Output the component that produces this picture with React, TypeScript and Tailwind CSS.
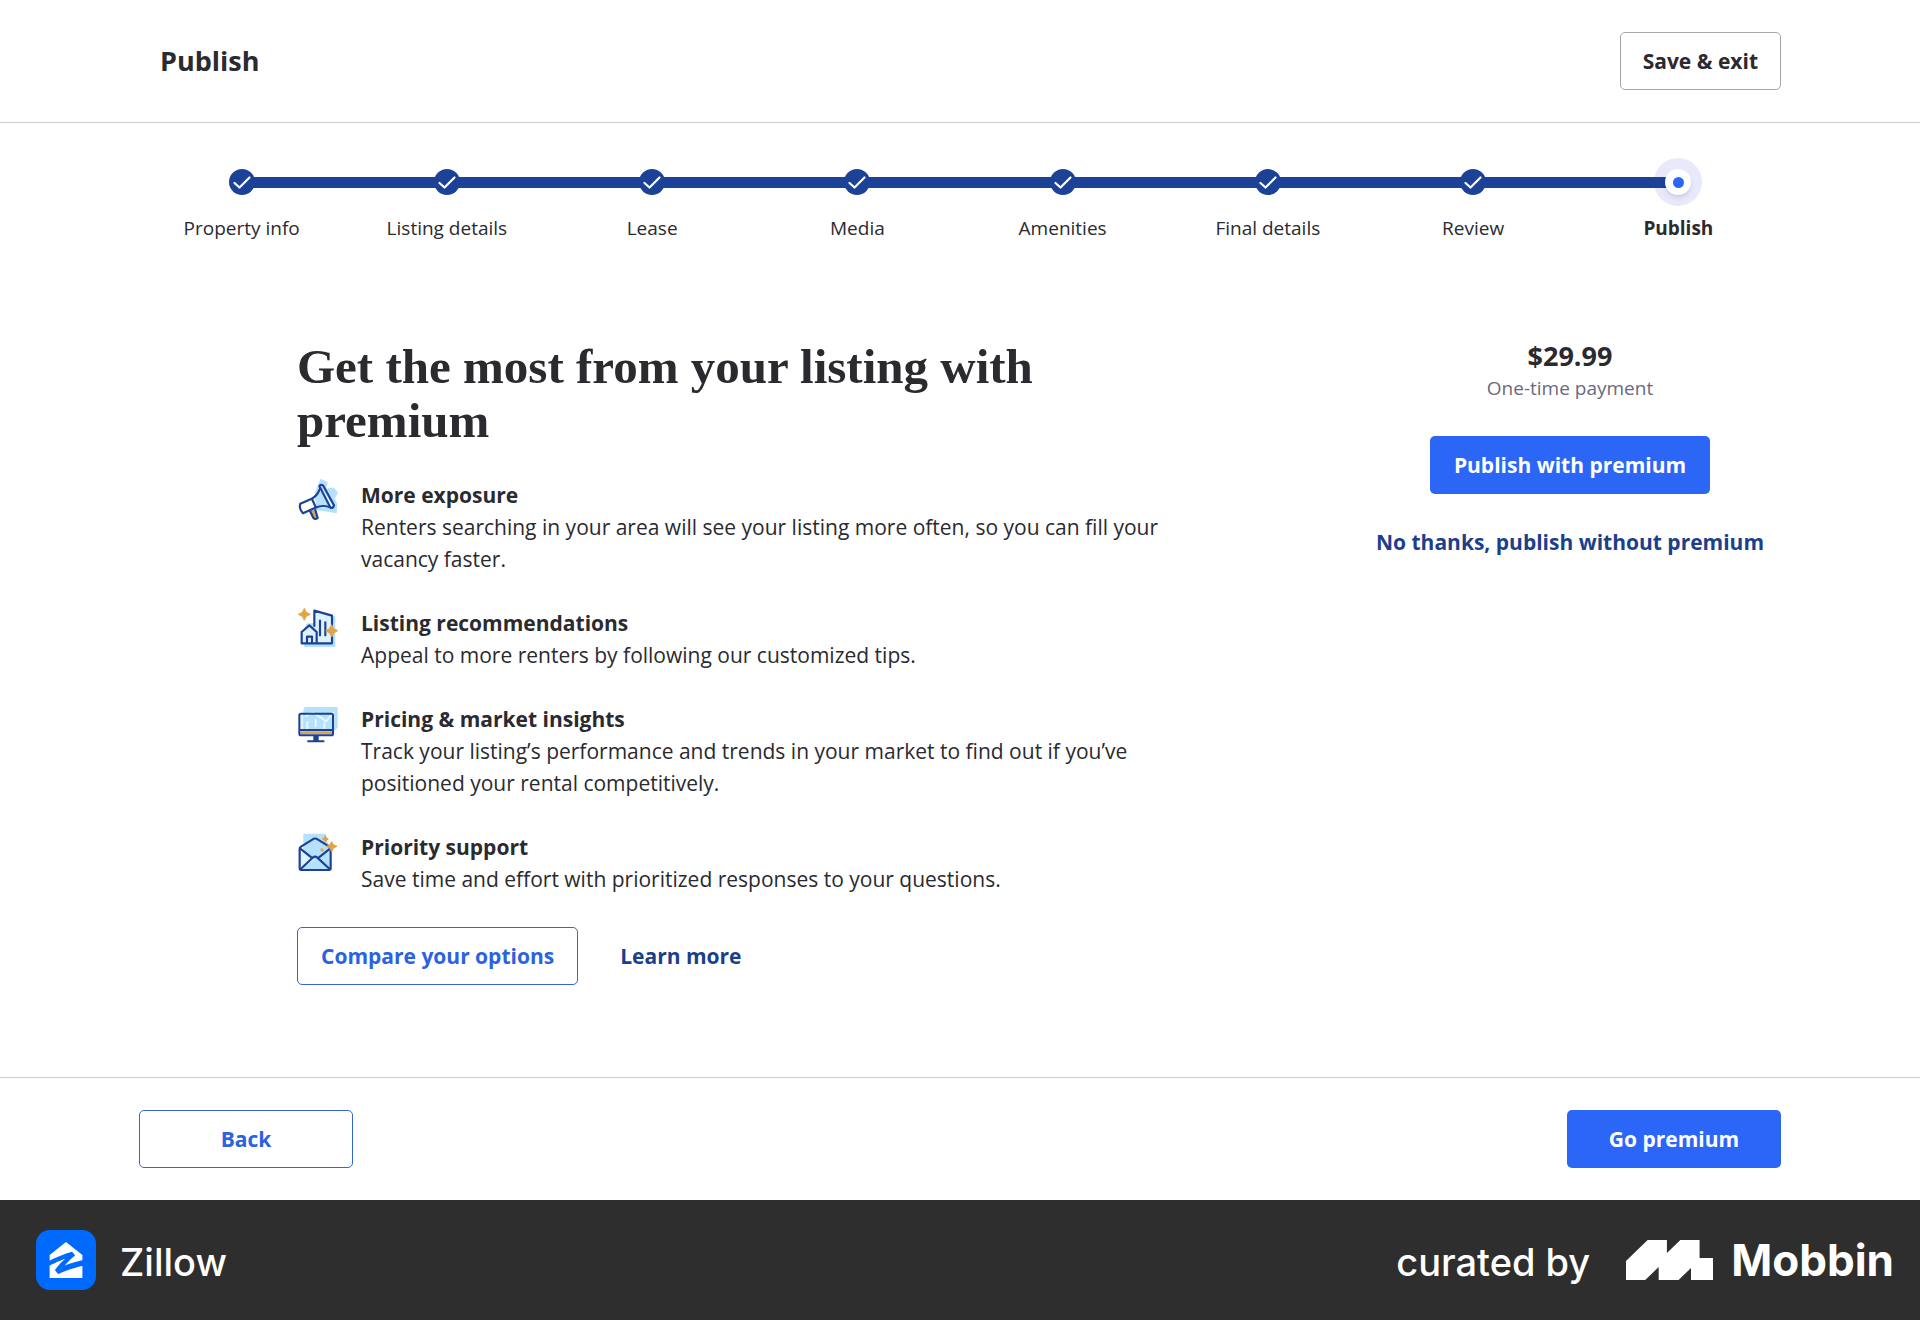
import type { ReactNode } from "react";
import { SiZillow } from "react-icons/si";

const steps = [
  "Property info",
  "Listing details",
  "Lease",
  "Media",
  "Amenities",
  "Final details",
  "Review",
  "Publish",
];

const NAVY = "#1c4297";
const SKY = "#b5e1fb";
const GOLD = "#e0a445";

function Megaphone() {
  return (
    <svg viewBox="51 57 132 132" className="size-11 shrink-0 overflow-visible" fill="none" aria-hidden="true">
      <path d="M122 56L144 67L138 86L160 82L174 98L164 116L172 131L170 160L108 150L104 98Z" fill={SKY} />
      <path d="M121 78L159 139L144 143L106 144L68 159Q58 143 60 131L96 114Q112 102 118 80Z" fill="#fff" />
      <path d="M104 112L124 92L148 134L110 140Z" fill={SKY} />
      <path d="M92 152L104 149L114 174Q108 181 102 176Z" fill="#d9a257" />
      <g stroke={NAVY} strokeWidth="6.5" strokeLinejoin="round" strokeLinecap="round">
        <path d="M118 78Q122 72 129 76L162 136Q161 144 152 144Z" />
        <path d="M120 86Q112 108 95 116L61 131Q56 146 69 160L106 143Q127 134 148 141" />
        <path d="M96 117L107 141M90 153L99 172Q105 181 113 174L106 150" />
      </g>
    </svg>
  );
}

function Buildings() {
  return (
    <svg viewBox="51 51 132 132" className="size-11 shrink-0 overflow-visible" fill="none" aria-hidden="true">
      <path d="M80 100H102V78H166V171H72V120Z" fill={SKY} />
      <path d="M103 63L155 77V158H103Z" fill="#def2fe" />
      <path d="M66 126L87 107L108 126V159H66Z" fill="#def2fe" />
      <g stroke={NAVY} strokeWidth="6.5" strokeLinejoin="round" strokeLinecap="round">
        <path d="M103 108V62L156 77V106M156 138V160H65V126L88 106L110 126V158M81 158V140H96V158" />
        <path d="M120 92V136M136 97V136" />
      </g>
      <path d="M73 55Q76 70 91 73Q76 76 73 91Q70 76 55 73Q70 70 73 55Z" fill={GOLD} stroke={GOLD} strokeWidth="3" />
      <path d="M155 104Q159 119 173 122Q159 126 155 141Q151 126 137 122Q151 119 155 104Z" fill={GOLD} stroke={GOLD} strokeWidth="3" />
    </svg>
  );
}

function Monitor() {
  return (
    <svg viewBox="51 39 132 132" className="size-11 shrink-0 overflow-visible" fill="none" aria-hidden="true">
      <path d="M74 51H173V113L160 125H70V60Z" fill={SKY} />
      <path d="M61 73H156V122H61Z" fill={SKY} />
      <path d="M61 73H70V122H61Z" fill="#def2fe" />
      <path d="M82 94V118M107 88V110M133 98V118M76 79L98 68L122 82L138 94L162 66" stroke="#eaf7fe" strokeWidth="6" />
      <path d="M61 124H157V132H61Z" fill={GOLD} />
      <g stroke={NAVY} strokeWidth="6" strokeLinejoin="round" strokeLinecap="round">
        <rect x="58" y="71" width="101" height="65" rx="5" />
        <path d="M60 120H158" />
      </g>
      <path d="M100 136H116V151H133V157H82V151H100Z" fill={NAVY} />
    </svg>
  );
}

function Envelope() {
  return (
    <svg viewBox="51 33 132 132" className="size-11 shrink-0 overflow-visible" fill="none" aria-hidden="true">
      <path d="M70 41H138V58L152 84V148H70Z" fill={SKY} />
      <path d="M60 92L103 120L62 148Z" fill="#def2fe" />
      <g stroke={NAVY} strokeWidth="6.5" strokeLinejoin="round" strokeLinecap="round">
        <path d="M59 86Q59 82 63 80L97 59Q105 52 114 59L148 80Q152 83 152 87V145Q152 150 147 150H64Q59 150 59 145Z" />
        <path d="M60 85L94 112M151 85L117 112M62 147L98 113Q105 107 112 113L149 147" />
      </g>
      <path d="M136 47Q138 55 145 57Q138 59 136 67Q134 59 127 57Q134 55 136 47Z" fill={GOLD} stroke={GOLD} strokeWidth="3" />
      <path d="M155 65Q158 76 171 79Q158 82 155 95Q152 82 139 79Q152 76 155 65Z" fill={GOLD} stroke={GOLD} strokeWidth="3" />
      <circle cx="126" cy="90" r="5" fill={GOLD} />
    </svg>
  );
}

const features: { icon: ReactNode; title: string; text: string }[] = [
  {
    icon: <Megaphone />,
    title: "More exposure",
    text: "Renters searching in your area will see your listing more often, so you can fill your vacancy faster.",
  },
  {
    icon: <Buildings />,
    title: "Listing recommendations",
    text: "Appeal to more renters by following our customized tips.",
  },
  {
    icon: <Monitor />,
    title: "Pricing & market insights",
    text: "Track your listing’s performance and trends in your market to find out if you’ve positioned your rental competitively.",
  },
  {
    icon: <Envelope />,
    title: "Priority support",
    text: "Save time and effort with prioritized responses to your questions.",
  },
];

function Stepper() {
  return (
    <ol className="mx-auto grid w-full max-w-[1642px] grid-cols-8 pt-[35px]">
      {steps.map((label, i) => {
        const current = i === steps.length - 1;
        return (
          <li key={label} className="flex flex-col items-center" aria-current={current ? "step" : undefined}>
            <div className="grid h-12 w-full grid-cols-2 items-center">
              {current && (
                <span className="col-span-2 col-start-1 row-start-1 size-12 justify-self-center rounded-full bg-[#e8eafc]" />
              )}
              <span className={i === 0 ? "col-start-1 row-start-1 h-[11px]" : "col-start-1 row-start-1 h-[11px] bg-[#1c4297]"} />
              <span className={current ? "col-start-2 row-start-1 h-[11px]" : "col-start-2 row-start-1 h-[11px] bg-[#1c4297]"} />
              {current ? (
                <span className="col-span-2 col-start-1 row-start-1 flex size-[26px] items-center justify-center justify-self-center rounded-full bg-white shadow-md">
                  <span className="size-[11px] rounded-full bg-[#2b66f6]" />
                </span>
              ) : (
                <span className="col-span-2 col-start-1 row-start-1 flex size-[26px] items-center justify-center justify-self-center rounded-full bg-[#1c4297]">
                  <svg viewBox="0 0 26 26" className="size-[26px]" fill="none" stroke="#fff" strokeWidth="2.2" strokeLinecap="round" strokeLinejoin="round" aria-hidden="true">
                    <path d="M5.500 14L10.500 18.500L20.500 8.500" />
                  </svg>
                </span>
              )}
            </div>
            <span className={current ? "mt-2.5 text-[19px] leading-6 font-bold" : "mt-2.5 text-[19px] leading-6"}>{label}</span>
          </li>
        );
      })}
    </ol>
  );
}

export default function App() {
  return (
    <div className="flex min-h-screen flex-col bg-white font-['Open_Sans',sans-serif] text-[21px] leading-8 text-[#2a2a2f]">
      <header className="border-b border-[#cdcdd0] px-8 py-8">
        <div className="mx-auto flex max-w-[1642px] items-center justify-between">
          <h1 className="pl-[21px] text-[27px] font-bold">Publish</h1>
          <button type="button" className="h-[58px] rounded-[5px] border border-[#a7a6ab] px-[22px] font-bold">
            Save &amp; exit
          </button>
        </div>
      </header>

      <main className="flex-1 px-8">
        <Stepper />
        <div className="mx-auto flex max-w-[1642px] items-start justify-between pt-[100px] pb-[92px] pl-[158px]">
          <section className="w-[883px]">
            <h2 className="font-['Liberation_Serif',serif] text-[49px] leading-[54px] font-bold">
              Get the most from your listing with premium
            </h2>
            <ul className="mt-[31px] flex flex-col gap-8">
              {features.map((f) => (
                <li key={f.title} className="flex gap-5">
                  {f.icon}
                  <div>
                    <h3 className="font-bold">{f.title}</h3>
                    <p>{f.text}</p>
                  </div>
                </li>
              ))}
            </ul>
            <div className="mt-8 flex items-center gap-[42px]">
              <button type="button" className="h-[58px] rounded-[5px] border border-[#3566d6] px-[23px] font-bold text-[#2b62e4]">
                Compare your options
              </button>
              <a href="#learn-more" className="font-bold text-[#1c3f8c]">
                Learn more
              </a>
            </div>
          </section>

          <aside className="flex w-[422px] flex-col items-center">
            <p className="text-[27px] font-bold">$29.99</p>
            <p className="text-[19px] text-[#6a6a7e]">One-time payment</p>
            <button type="button" className="mt-8 h-[58px] rounded-[5px] bg-[#2b66f6] px-6 font-bold text-white">
              Publish with premium
            </button>
            <a href="#without-premium" className="mt-8 font-bold text-[#1c3f8c]">
              No thanks, publish without premium
            </a>
          </aside>
        </div>
      </main>

      <div className="border-t border-[#cdcdd0] px-8 py-8">
        <div className="mx-auto flex max-w-[1642px] justify-between">
          <button type="button" className="h-[58px] w-[214px] rounded-[5px] border border-[#3566d6] font-bold text-[#2b62e4]">
            Back
          </button>
          <button type="button" className="h-[58px] w-[214px] rounded-[5px] bg-[#2b66f6] font-bold text-white">
            Go premium
          </button>
        </div>
      </div>

      <footer className="flex h-[120px] items-center justify-between bg-[#2e2e2e] pr-[26px] pl-9 font-['Inter',sans-serif] text-white">
        <div className="flex items-center gap-6">
          <span className="flex size-[60px] items-center justify-center rounded-[14px] bg-[#006aff]">
            <SiZillow className="size-9" />
          </span>
          <span className="pt-1 text-[38px] leading-[60px] font-medium">Zillow</span>
        </div>
        <div className="flex items-center">
          <span className="pt-1 text-[38px] leading-[60px] font-medium">curated by</span>
          <svg viewBox="717 150 253 120" preserveAspectRatio="none" className="ml-9 h-10 w-[87px]" fill="#fff" aria-hidden="true">
            <path d="M780 150H836V189L875 150H931V204H970V270H906V234L870 270H812V231L773 270H717V213Z" />
          </svg>
          <span className="ml-[18px] text-[44px] leading-[60px] font-bold">Mobbin</span>
        </div>
      </footer>
    </div>
  );
}
